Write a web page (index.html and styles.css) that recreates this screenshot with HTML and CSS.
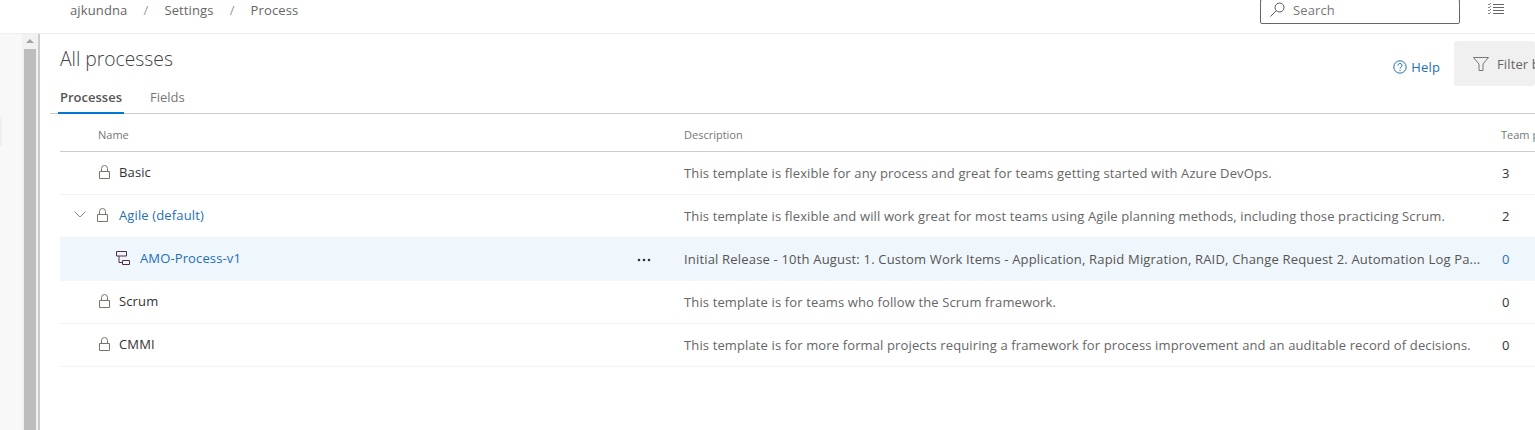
FILE: index.html
```html
<!DOCTYPE html>
<html lang="en">
<head>
    <meta charset="UTF-8">
    <title>All processes</title>
    <link rel="stylesheet" href="styles.css">
</head>
<body>
<header class="topbar">
    <nav class="crumbs">
        <span>ajkundna</span><span class="sep">/</span><span>Settings</span><span class="sep">/</span><span>Process</span>
    </nav>
    <div class="search">
        <svg class="search-icon" width="16" height="16" viewBox="0 0 16 16"><circle cx="10.500" cy="5.500" r="4.500" fill="none" stroke="#555"/><path d="M7.200 8.800 1.500 14.500" stroke="#555" fill="none"/></svg>
        <span>Search</span>
    </div>
    <svg class="list-icon" width="16" height="14" viewBox="0 0 16 14"><path d="M5 1.500h11M5 4.500h11M5 7.500h11M5 10.500h11" stroke="#666" fill="none"/><path d="M0 1l1 1 2-2M0 4l1 1 2-2M0 7l1 1 2-2M0 10l1 1 2-2" stroke="#888" fill="none"/></svg>
</header>
<div class="layout">
    <aside class="sidebar">
        <div class="side-panel"><div class="side-item"></div></div>
        <div class="scrollbar">
            <div class="arrow"></div>
            <div class="thumb"></div>
        </div>
    </aside>
    <main class="content">
        <div class="title-row">
            <h1>All processes</h1>
            <div class="actions">
                <a class="help">
                    <svg width="14" height="14" viewBox="0 0 14 14"><circle cx="7" cy="7" r="6.200" fill="none" stroke="#1f6fb5"/><path d="M5 5.500a2 2 0 1 1 3 1.700c-.7.400-1 .8-1 1.500" fill="none" stroke="#1f6fb5"/><circle cx="7" cy="10.600" r=".7" fill="#1f6fb5"/></svg>
                    Help
                </a>
                <div class="filter">
                    <svg width="16" height="16" viewBox="0 0 16 16"><path d="M.5 1.500h15L10 8v6.500H6V8z" fill="none" stroke="#777"/></svg>
                    <span>Filter by keyword</span>
                </div>
            </div>
        </div>
        <div class="tabs">
            <div class="tab active">Processes</div>
            <div class="tab">Fields</div>
        </div>
        <div class="table">
            <div class="row head">
                <div class="name-cell">Name</div>
                <div>Description</div>
                <div>Team projects</div>
            </div>
            <div class="row">
                <div class="name-cell">
                    <svg class="lock" width="11" height="14" viewBox="0 0 11 14"><path d="M2.500 6.500V3.500a3 3 0 0 1 6 0v3M.5 6.500h10v7H.500z" fill="none" stroke="#707a68"/></svg>
                    <span class="name">Basic</span>
                </div>
                <div class="desc">This template is flexible for any process and great for teams getting started with Azure DevOps.</div>
                <div class="count">3</div>
            </div>
            <div class="row">
                <div class="name-cell">
                    <svg class="chevron" width="12" height="7" viewBox="0 0 12 7"><path d="M.5.500l5.500 5.500 5.500-5.500" fill="none" stroke="#888"/></svg>
                    <svg class="lock" width="11" height="14" viewBox="0 0 11 14"><path d="M2.500 6.500V3.500a3 3 0 0 1 6 0v3M.5 6.500h10v7H.500z" fill="none" stroke="#707a68"/></svg>
                    <span class="name link">Agile (default)</span>
                </div>
                <div class="desc">This template is flexible and will work great for most teams using Agile planning methods, including those practicing Scrum.</div>
                <div class="count">2</div>
            </div>
            <div class="row selected">
                <div class="name-cell child">
                    <svg class="tree" width="14" height="14" viewBox="0 0 14 14"><path d="M.5.500h10v4.500H.500zM6.500 9.500h7v4h-7zM3 5v6.500h3.500" fill="none" stroke="#5b2a4a"/></svg>
                    <span class="name link">AMO-Process-v1</span>
                    <svg class="dots" width="14" height="4" viewBox="0 0 14 4"><circle cx="2" cy="2" r="1.300"/><circle cx="7" cy="2" r="1.300"/><circle cx="12" cy="2" r="1.300"/></svg>
                </div>
                <div class="desc">Initial Release - 10th August: 1. Custom Work Items - Application, Rapid Migration, RAID, Change Request 2. Automation Log Pa...</div>
                <div class="count link">0</div>
            </div>
            <div class="row">
                <div class="name-cell">
                    <svg class="lock" width="11" height="14" viewBox="0 0 11 14"><path d="M2.500 6.500V3.500a3 3 0 0 1 6 0v3M.5 6.500h10v7H.500z" fill="none" stroke="#707a68"/></svg>
                    <span class="name">Scrum</span>
                </div>
                <div class="desc">This template is for teams who follow the Scrum framework.</div>
                <div class="count">0</div>
            </div>
            <div class="row">
                <div class="name-cell">
                    <svg class="lock" width="11" height="14" viewBox="0 0 11 14"><path d="M2.500 6.500V3.500a3 3 0 0 1 6 0v3M.5 6.500h10v7H.500z" fill="none" stroke="#707a68"/></svg>
                    <span class="name">CMMI</span>
                </div>
                <div class="desc">This template is for more formal projects requiring a framework for process improvement and an auditable record of decisions.</div>
                <div class="count">0</div>
            </div>
        </div>
    </main>
</div>
</body>
</html>
```

FILE: styles.css
```css
html, body {
    height: 100%;
}

body {
    margin: 0;
    overflow: hidden;
    background-color: #fff;
    font-family: "Open Sans", "Noto Sans", sans-serif;
    font-size: 13px;
    letter-spacing: .13px;
    color: #333;
}

.topbar {
    display: flex;
    align-items: flex-start;
    height: 33px;
    border-bottom: 1px solid #eee;
}

.crumbs {
    display: flex;
    margin-left: 70px;
    height: 21px;
    line-height: 21px;
    color: #666;
}

.sep {
    margin: 0 16px;
    color: #999;
}

.search {
    display: flex;
    align-items: center;
    gap: 8px;
    box-sizing: border-box;
    width: 200px;
    height: 25px;
    margin-left: auto;
    margin-top: -1px;
    padding: 0 8px 4px;
    border: 1px solid #666;
    border-radius: 2px;
    color: #777;
}

.search svg {
    flex: none;
}

.list-icon {
    margin: 3px 31px 0 28px;
}

.layout {
    display: flex;
    height: 396px;
}

.sidebar {
    display: flex;
    flex: none;
    width: 38px;
    border-right: 2px solid #ccc;
    background-color: #f8f8f8;
}

.side-panel {
    flex: 1;
    padding-top: 82px;
}

.side-item {
    width: 2px;
    height: 30px;
    background-color: #f0f0f0;
}

.scrollbar {
    width: 16px;
    padding: 0 2px;
    box-sizing: border-box;
    background-color: #f1f1f1;
}

.arrow {
    width: 0;
    margin: 5px auto 6px;
    border: 4px solid transparent;
    border-top: 0;
    border-bottom: 4px solid #a3a3a3;
}

.thumb {
    height: 390px;
    background-color: #bdbdbd;
}

.content {
    flex: 1;
    min-width: 0;
    padding-left: 10px;
}

.title-row {
    display: flex;
    justify-content: space-between;
    height: 55px;
    padding-left: 10px;
}

h1 {
    margin: 10px 0 0;
    font-size: 19.3px;
    font-weight: 300;
    letter-spacing: 0;
    line-height: 30px;
    color: #444;
}

.actions {
    display: flex;
    align-items: flex-start;
}

.help {
    display: flex;
    align-items: center;
    gap: 4px;
    margin: 23px 14px 0 0;
    line-height: 20px;
    color: #1f6fb5;
}

.help svg {
    flex: none;
}

.filter {
    display: flex;
    align-items: center;
    gap: 8px;
    box-sizing: border-box;
    width: 81px;
    height: 45px;
    margin-top: 7px;
    padding: 0 0 0 19px;
    overflow: hidden;
    white-space: nowrap;
    border-radius: 3px;
    background-color: #f0f0f0;
    color: #666;
}

.filter svg {
    flex: none;
}

.tabs {
    display: flex;
    height: 24px;
    padding-left: 8px;
    border-bottom: 1px solid #ccc;
}

.tab {
    box-sizing: border-box;
    height: 25px;
    padding: 0 2px;
    margin-right: 24px;
    line-height: 16px;
    letter-spacing: 0;
    color: #777;
}

.tab.active {
    border-bottom: 2px solid #0078d4;
    font-weight: 600;
    color: #555;
}

.table {
    margin-left: 10px;
}

.row {
    display: grid;
    grid-template-columns: 624px 798px 1fr;
    height: 43px;
    align-items: center;
    border-bottom: 1px solid #f2f2f2;
    box-sizing: border-box;
}

.row > div:last-child {
    padding-left: 20px;
    white-space: nowrap;
}

.row.head {
    height: 38px;
    padding-top: 4px;
    border-bottom: 1px solid #ccc;
    font-size: 11px;
    letter-spacing: 0;
    color: #777;
}

.row.head > div:last-child {
    padding-left: 19px;
}

.row.selected {
    border-bottom-color: #eff6fc;
    background-color: #eff6fc;
}

.name-cell {
    display: flex;
    align-items: center;
    padding-left: 38px;
    min-width: 0;
}

.name {
    margin-top: -2px;
    color: #333;
}

.lock {
    margin: -3px 9px 0 1px;
}

.chevron {
    margin: -3px 11px 0 -24px;
}

.chevron + .lock {
    margin-left: 0;
    margin-right: 11px;
}

.name.link, .count.link {
    color: #1f6fb5;
}

.child {
    padding-left: 56px;
}

.tree {
    margin: -2px 10px 0 0;
}

.dots {
    margin: 2px 33px 0 auto;
    fill: #333;
}

.desc {
    white-space: nowrap;
    color: #666;
}

.selected .desc {
    letter-spacing: .18px;
    color: #555;
}

.count {
    color: #333;
}
```
